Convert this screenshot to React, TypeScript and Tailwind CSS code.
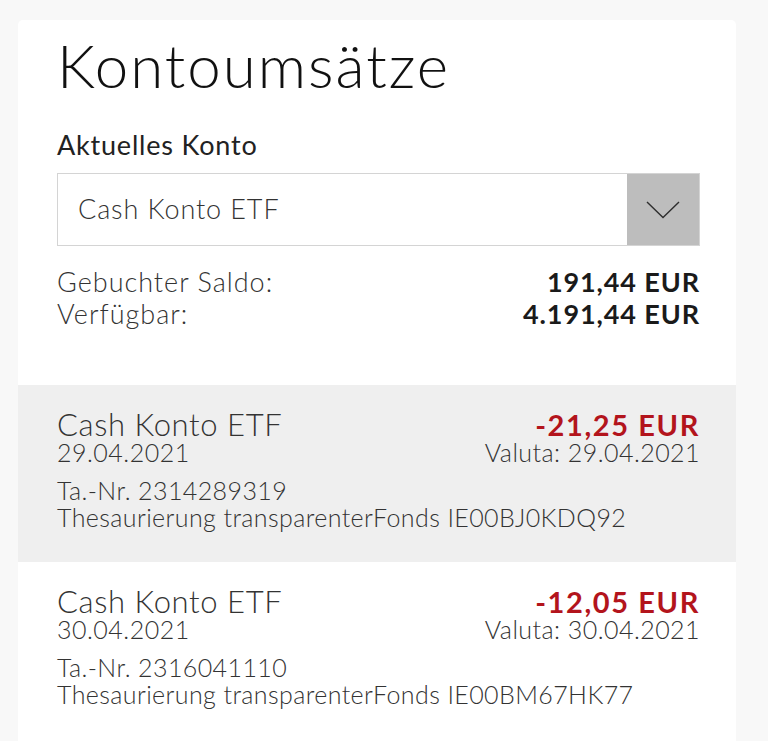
import React from 'react';

interface Umsatz {
    konto: string;
    datum: string;
    betrag: string;
    valuta: string;
    taNr: string;
    text: string;
}

const umsaetze: Umsatz[] = [
    {
        konto: 'Cash Konto ETF',
        datum: '29.04.2021',
        betrag: '-21,25 EUR',
        valuta: '29.04.2021',
        taNr: '2314289319',
        text: 'Thesaurierung transparenterFonds IE00BJ0KDQ92',
    },
    {
        konto: 'Cash Konto ETF',
        datum: '30.04.2021',
        betrag: '-12,05 EUR',
        valuta: '30.04.2021',
        taNr: '2316041110',
        text: 'Thesaurierung transparenterFonds IE00BM67HK77',
    },
];

function Chevron() {
    return (
        <svg width="34" height="18" viewBox="0 0 34 18" fill="none">
            <path d="M1 1 L17 16.5 L33 1" stroke="#2e2e2e" strokeWidth="1.4" />
        </svg>
    );
}

function UmsatzRow({ u, grau }: { u: Umsatz; grau: boolean }) {
    return (
        <div className={`h-[177px] pl-[39px] pr-[36px] pt-[24px] ${grau ? 'bg-[#efefef]' : 'bg-white'}`}>
            <div className="flex justify-between items-start">
                <div>
                    <div className="text-[31px] leading-[31px] tracking-[0.6px] text-[#333] font-light">{u.konto}</div>
                    <div className="text-[25px] leading-[24px] tracking-[0.5px] text-[#333] font-light">{u.datum}</div>
                </div>
                <div className="text-right">
                    <div className="text-[29px] leading-[31px] tracking-[1.6px] text-[#b3141c] font-bold">{u.betrag}</div>
                    <div className="text-[25px] leading-[24px] tracking-[0.45px] text-[#333] font-light">Valuta: {u.valuta}</div>
                </div>
            </div>
            <div className="mt-[13px] text-[25px] leading-[27px] tracking-[0.4px] text-[#333] font-light">
                <div>Ta.-Nr. {u.taNr}</div>
                <div>{u.text}</div>
            </div>
        </div>
    );
}

export default function App() {
    return (
        <div className="min-h-[741px] bg-[#f8f8f8] pl-[18px] pr-[32px] pt-[20px] overflow-hidden" style={{ fontFamily: 'Lato, "Open Sans", sans-serif' }}>
            <div className="bg-white rounded-t-[5px] min-h-[721px]">
                <div className="pl-[39px] pr-[36px] pt-[10px] pb-[55px]">
                    <h1 className="text-[60px] leading-[70px] tracking-[2px] font-light text-[#111]">Kontoumsätze</h1>
                    <div className="mt-[30px] text-[27px] leading-[30px] tracking-[0.8px] text-[#222]">Aktuelles Konto</div>
                    <div className="mt-[13px] flex h-[73px] border border-[#d4d4d4]">
                        <div className="flex-1 flex items-center pl-[20px] text-[27px] tracking-[0.9px] text-[#333] font-light">Cash Konto ETF</div>
                        <div className="w-[72px] bg-[#bdbdbd] flex items-center justify-center">
                            <Chevron />
                        </div>
                    </div>
                    <div className="mt-[20px] text-[27px] leading-[32px] text-[#333]">
                        <div className="flex justify-between">
                            <span className="font-light tracking-[1px]">Gebuchter Saldo:</span>
                            <span className="font-bold tracking-[0.9px] text-[#1a1a1a]">191,44 EUR</span>
                        </div>
                        <div className="flex justify-between">
                            <span className="font-light tracking-[1px]">Verfügbar:</span>
                            <span className="font-bold tracking-[0.9px] text-[#1a1a1a]">4.191,44 EUR</span>
                        </div>
                    </div>
                </div>
                {umsaetze.map((u, i) => (
                    <UmsatzRow key={u.taNr} u={u} grau={i === 0} />
                ))}
            </div>
        </div>
    );
}
